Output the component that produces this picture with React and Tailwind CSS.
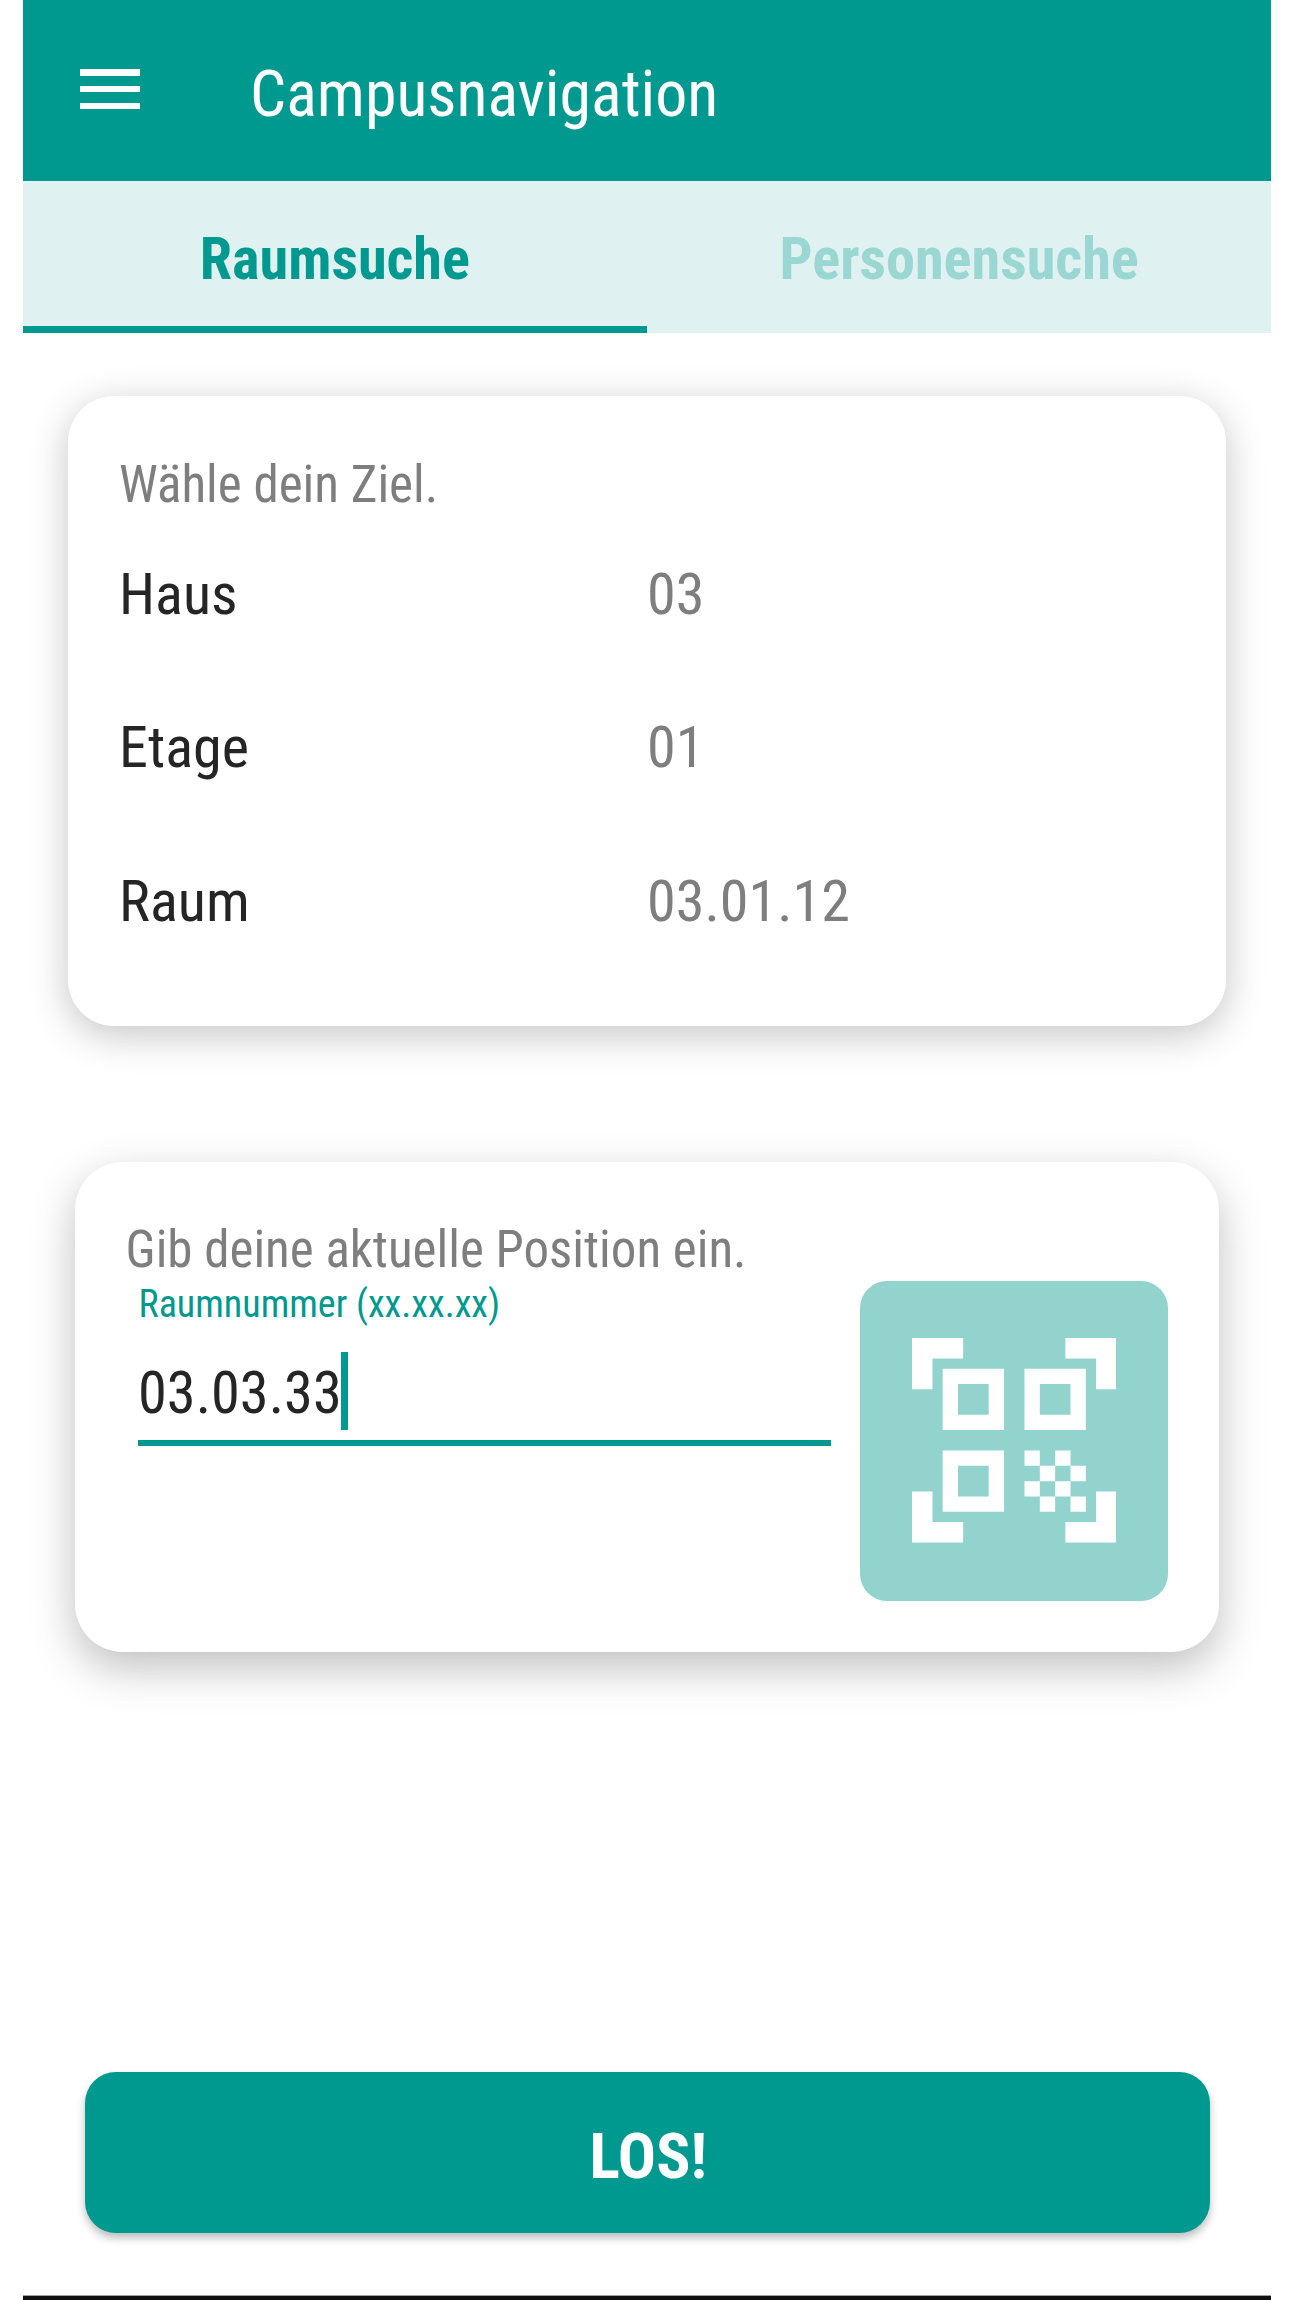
const TARGET = [
  { label: "Haus", value: "03" },
  { label: "Etage", value: "01" },
  { label: "Raum", value: "03.01.12" },
];

function MenuIcon() {
  return (
    <div className="mt-[69px] flex h-[40px] w-[60px] flex-col justify-between">
      <span className="h-[6.5px] bg-white" />
      <span className="h-[6.5px] bg-white" />
      <span className="h-[6.5px] bg-white" />
    </div>
  );
}

function QrScanIcon() {
  return (
    <svg viewBox="0 0 20 20" className="size-[204.5px]" fill="white">
      <path d="M0 0h5v2H2v3H0zM15 0h5v5h-2V2h-3zM0 15h2v3h3v2H0zM18 15h2v5h-5v-2h3z" />
      <path
        fillRule="evenodd"
        d="M3 3h6v6H3zM4.5 4.5v3h3v-3zM11 3h6v6h-6zM12.5 4.5v3h3v-3zM3 11h6v6H3zM4.5 12.5v3h3v-3z"
      />
      <path d="M11 11h1.5v1.5H11zM14 11h1.5v1.5H14zM12.5 12.5H14V14h-1.5zM15.5 12.5H17V14h-1.5zM11 14h1.5v1.5H11zM14 14h1.5v1.5H14zM12.5 15.5H14V17h-1.5zM15.5 15.5H17V17h-1.5z" />
    </svg>
  );
}

export default function App() {
  return (
    <div className="flex h-[2300px] w-[1294px] flex-col overflow-hidden bg-white pr-[23.5px] pl-[23px] font-['Roboto_Condensed',Roboto,sans-serif]">
      <header className="flex h-[181px] shrink-0 bg-[#009990] pl-[57px] text-white">
        <MenuIcon />
        <h1 className="mt-[63px] ml-[110px] text-[63.9px] leading-none">Campusnavigation</h1>
      </header>

      <nav className="grid h-[152px] shrink-0 grid-cols-2 bg-[#dff1f0] text-center text-[58.3px] leading-none font-bold">
        <div className="border-b-[7px] border-[#009990] pt-[49px] text-[#009990]">Raumsuche</div>
        <div className="pt-[49px] pl-px text-[#9ad7d2]">Personensuche</div>
      </nav>

      <section className="mt-[63px] ml-[45px] h-[630px] w-[1158px] shrink-0 rounded-[46px] bg-white pt-[63px] pl-[51px] shadow-[0_9px_38px_rgba(0,0,0,0.23)]">
        <h2 className="text-[51px] leading-[52px] text-[#7e7e7e]">Wähle dein Ziel.</h2>
        <dl className="mt-[12px] text-[58.2px] leading-none">
          {TARGET.map((row) => (
            <div key={row.label} className="grid h-[153.4px] grid-cols-[528px_1fr] pt-[42px]">
              <dt className="text-[#252525]">{row.label}</dt>
              <dd className="text-[#7e7e7e]">{row.value}</dd>
            </div>
          ))}
        </dl>
      </section>

      <section className="mt-[136px] ml-[52px] flex h-[489.5px] w-[1144px] shrink-0 rounded-[48px] bg-white pt-[62px] pl-[50.5px] shadow-[0_16px_44px_rgba(0,0,0,0.25)]">
        <div className="w-[734px]">
          <h2 className="text-[51px] leading-[52px] whitespace-nowrap text-[#7e7e7e]">
            Gib deine aktuelle Position ein.
          </h2>
          <div className="mt-[8px] ml-[12.5px] w-[693px]">
            <label className="block pl-[0.5px] text-[38px] leading-[40px] text-[#009990]">Raumnummer (xx.xx.xx)</label>
            <div className="mt-[28px] flex h-[94px] border-b-[6px] border-[#009990]">
              <span className="mt-[12px] w-[203px] text-[58.4px] leading-none text-[#252525]">03.03.33</span>
              <span className="h-[78px] w-[6.5px] bg-[#009990]" />
            </div>
          </div>
        </div>
        <button className="mt-[56.5px] flex h-[320px] w-[308.5px] items-center justify-center rounded-[27px] bg-[#92d3ce]">
          <QrScanIcon />
        </button>
      </section>

      <button className="mt-[420.5px] ml-[62px] h-[161px] w-[1124.5px] shrink-0 rounded-[31px] bg-[#009990] pt-[8px] pl-[2px] text-[63.5px] leading-none font-bold text-white shadow-[0_5px_9px_rgba(0,0,0,0.26)]">
        LOS!
      </button>

      <footer className="mt-auto h-[5px] shrink-0 border-t border-[#a0a0a0] bg-[#111111]" />
    </div>
  );
}
